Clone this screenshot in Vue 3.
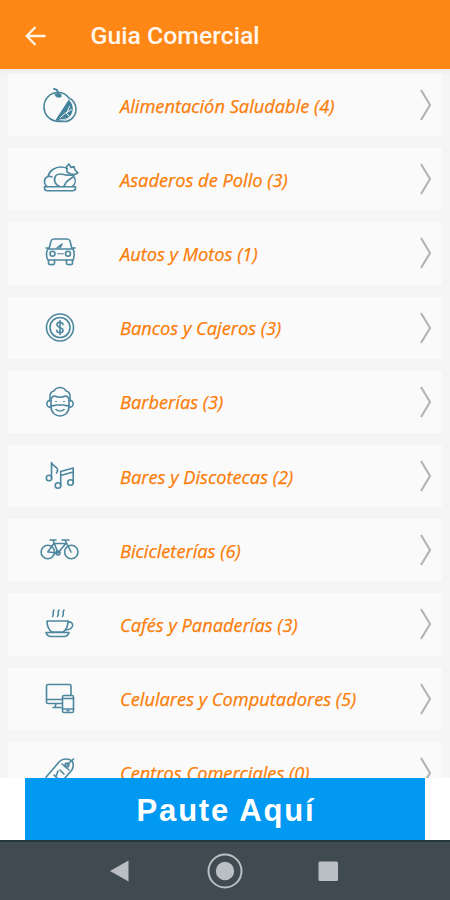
<template>
  <div class="screen">
    <header class="toolbar">
      <svg class="back" viewBox="0 0 22 22">
        <path d="M20.5 11H2M10.5 2L1.8 11l8.7 9" />
      </svg>
      <h1>Guia Comercial</h1>
    </header>

    <main class="list">
      <div v-for="item in categories" :key="item.name" class="row">
        <svg class="icon" viewBox="0 0 40 40" v-html="item.icon"></svg>
        <span class="label"><span class="label-text">{{ item.name }} ({{ item.count }})</span></span>
        <svg class="chevron" viewBox="0 0 14 34">
          <path d="M2 2l9 15-9 15" />
        </svg>
      </div>
    </main>

    <div class="banner-wrap">
      <div class="banner"><span>Paute Aquí</span></div>
    </div>

    <nav class="navbar">
      <svg viewBox="0 0 36 36"><path d="M24.500 7.500v21L6 18z" /></svg>
      <svg viewBox="0 0 36 36">
        <circle cx="18" cy="18" r="16.5" class="ring" />
        <circle cx="18" cy="18" r="9.2" />
      </svg>
      <svg viewBox="0 0 36 36"><rect x="8.5" y="8.5" width="19.5" height="19.5" rx="1.5" /></svg>
    </nav>
  </div>
</template>

<script setup>
const icons = {
  orange:
    '<path d="M15 36C8.500 34.500 4 29 4 22 4 14 10 7.500 18 7.500c4.500 0 8.500 2 10.800 5.500 4.200 1.500 7.200 6 7.200 11 0 7-5 12.500-12 12.500-3 0-6 .2-9-.5z"/><path d="M28.800 14.500L15 35.800c6 .2 11 0 14.500-3.500 5-5 4.500-13-.7-17.800z" fill="#43839c" stroke="none"/><path d="M26 28l5.500-3.500M26 28l3 3M25 28.500l-4.500 4M27 27.500l2.500-6" stroke="#fafafa" stroke-width="1"/><path d="M30.500 16c4 5 3.800 11-.5 15.500-2.500 2.500-6 3.500-10 3.200" stroke="#fafafa" stroke-width=".8"/><path d="M14 4c3 0 4 1.500 4 5" stroke-width="2"/><path d="M15 9h6v3h-4z" fill="#43839c" stroke-width="1"/>',
  chicken:
    '<path d="M7 27.500C3 24 4 18.500 8 17.500 9.500 11.500 15 8 21 8c2.500 0 4.500.5 6.500 1.500"/><path d="M19.500 27.500c-5-2-6.500-7.500-3.500-11 4-4 8 .5 13-.5l5 .5c0 2-5 3-8 7-1 1.500-1 3-2.500 4M8 17.500c1.500-.5 3 0 4 .5M34 18c2 3 1.500 7-1.500 9.500"/><path d="M27 13l-.5-5.500L29 5l2 3.500 3-1 1 3.500 3 3-4 1.500-3-.5z"/><path d="M4.500 27.700h31v1.500c0 1.500-1 2.500-3 2.500h-25c-2 0-3-1-3-2.500z"/>',
  car:
    '<path d="M9 16l2-8c.5-1.500 1.500-2 3-2h13c1.500 0 2.500.5 3 2l2 8M8 16h25c1.500 2 1.500 9 0 11H8c-2-2-2-9 0-11zM6 15h3M32 15h3"/><circle cx="12.500" cy="20.700" r="2.500"/><circle cx="28" cy="20.700" r="2.500"/><path d="M17.500 20.700h6" stroke-width="1.100"/><path d="M8.500 27v3.500c0 1.500 6 1.500 6 0V27M26.500 27v3.500c0 1.500 6 1.500 6 0V27M17 15l5-4M20 15l2-4"/>',
  coin:
    '<circle cx="20" cy="19.500" r="13.500"/><circle cx="20" cy="19.500" r="10"/><path d="M23 16.500c-.5-3-6-3-6 .2 0 3 6 2.400 6 5.500 0 3.300-6 3.300-6.300 0M20 12.500v14"/>',
  barber:
    '<path d="M10 19v-5c0-3 2-4.500 4-5 1-2 4-3.500 6-3.500s5 1.500 6 3.500c2 .5 4 2 4 5v5"/><path d="M11 17c1-2 2-3 3.500-3 3.500 1.500 7.500 1.500 11 0 1.500 0 2.500 1 3.500 3M11 17v8c0 6 5 9 9 9s9-3 9-9v-8"/><path d="M11 18.500c-6-1-5 8 0 6.500M29 18.500c6-1 5 8 0 6.500"/><path d="M11 23.500c2 1 3.500 0 5-.5h8c1.500.5 3 1.500 5 .5M16 27.500c2 2 6 2 8 0"/><path d="M15.500 19.500h1M23.500 19.500h1" stroke-width="1.100"/>',
  music:
    '<path d="M11.500 22V6.500c1 5 9 4 5 10.500"/><circle cx="9" cy="22" r="2.700"/><path d="M20.700 29.500V15.500l12.500-3.500v14M20.700 19.500l12.500-3.500"/><circle cx="18" cy="29.500" r="2.800"/><circle cx="30.500" cy="26.500" r="2.800"/>',
  bike:
    '<circle cx="7.800" cy="22" r="6.700"/><circle cx="31.300" cy="22" r="6.700"/><path d="M7.800 22l6-8.500h12L18 23zM18 23L13 10M31 22L25 10h4M10 10h6M22 10h3"/><circle cx="18" cy="23" r="2"/>',
  cup:
    '<path d="M7 17h21c0 6-2 9-5 11H12c-3-2-5-5-5-11zM28 18c6-1 7 7-2 8M6 28.500h23c-1 3-3 4-5 4H11c-3 0-4-1-5-4z"/><path d="M14 6c-2 2 .5 4-1.500 6.500M19 6c-2 2 .5 4-1.500 6.500M24 6c-2 2 .5 4-1.500 6.500"/>',
  computer:
    '<path d="M22 24.500H8c-1 0-1.500-.5-1.500-1.500V7c0-1 .5-1.500 1.500-1.500h21.500c1 0 1.500.5 1.500 1.500v9M6.500 20.500H22M16 25l-1 3M13 28.500h8"/><rect x="22.500" y="16.500" width="11" height="17" rx="1.500"/><path d="M22.500 19.500h11M22.500 30h11M27 31.800h2"/>',
  tag:
    '<path d="M7 23L19.500 8.500C21 7 23 6 25.500 6c3 0 5 .5 6.500 2s1.500 3.500 1 6c-.3 1.500-1 3-2 4L18 33c-2 2-4 1-5 0l-6-5c-1.500-1.300-1.500-3.500 0-5z"/><circle cx="27" cy="12" r="1.900"/><path d="M27 12l6.500-6M22 11l7 6M14 22l4 4M18 18l-3 8M20 17l4 4"/>'
}

const categories = [
  { name: 'Alimentación Saludable', count: 4, icon: icons.orange },
  { name: 'Asaderos de Pollo', count: 3, icon: icons.chicken },
  { name: 'Autos y Motos', count: 1, icon: icons.car },
  { name: 'Bancos y Cajeros', count: 3, icon: icons.coin },
  { name: 'Barberías', count: 3, icon: icons.barber },
  { name: 'Bares y Discotecas', count: 2, icon: icons.music },
  { name: 'Bicicleterías', count: 6, icon: icons.bike },
  { name: 'Cafés y Panaderías', count: 3, icon: icons.cup },
  { name: 'Celulares y Computadores', count: 5, icon: icons.computer },
  { name: 'Centros Comerciales', count: 0, icon: icons.tag }
]
</script>

<style>
body {
  margin: 0;
  overflow: hidden;
}
</style>

<style scoped>
.screen {
  width: 450px;
  height: 900px;
  display: flex;
  flex-direction: column;
  background: #fff;
  overflow: hidden;
}

.toolbar {
  flex: none;
  height: 69px;
  display: flex;
  align-items: center;
  padding: 2px 0 0 25px;
  box-sizing: border-box;
  background: #ff8716;
}

.back {
  width: 22px;
  height: 22px;
  fill: none;
  stroke: #fff3e6;
  stroke-width: 2.3;
}

.toolbar h1 {
  margin: 0 0 0 43.5px;
  font-family: Roboto, sans-serif;
  font-size: 24.8px;
  font-weight: 500;
  color: #fff6ec;
}

.list {
  height: 709px;
  flex: none;
  display: flex;
  flex-direction: column;
  gap: 12px;
  padding: 5px 8px 0;
  box-sizing: border-box;
  background: linear-gradient(#eeeeee, #f5f5f5 7px);
  overflow: hidden;
}

.row {
  flex: none;
  height: 62.2px;
  display: flex;
  align-items: center;
  padding: 0 10px 0 32px;
  box-sizing: border-box;
  background: #fafafa;
}

.icon {
  width: 40px;
  height: 40px;
  flex: none;
  fill: none;
  stroke: #4c879e;
  stroke-width: 1.6;
  stroke-linecap: round;
  stroke-linejoin: round;
}

.label {
  flex: 1;
  margin-left: 40px;
  white-space: nowrap;
}

.label-text {
  display: inline-block;
  padding-top: 1px;
  font-family: 'Open Sans', 'Noto Sans', sans-serif;
  font-size: 19px;
  font-style: italic;
  font-weight: 500;
  line-height: 26px;
  color: #fa7d08;
  -webkit-text-stroke: 0.25px #fa7d08;
  transform: scaleX(0.96);
  transform-origin: left;
}

.chevron {
  width: 14px;
  height: 34px;
  margin-right: -1px;
  fill: none;
  stroke: #b2b2b2;
  stroke-width: 2.1;
}

.banner-wrap {
  flex: none;
  height: 62px;
  padding: 0 25px;
}

.banner {
  height: 100%;
  display: flex;
  align-items: center;
  justify-content: center;
  padding: 3px 0 0 2px;
  box-sizing: border-box;
  background: #0299f2;
  color: #fff;
  font-family: 'Liberation Sans', Arial, sans-serif;
  font-size: 31px;
  font-weight: bold;
  letter-spacing: 1.8px;
}

.navbar {
  flex: 1;
  display: flex;
  align-items: center;
  justify-content: center;
  gap: 67px;
  background: #404b51;
  border-top: 2px solid #26383d;
}

.navbar svg {
  width: 36px;
  height: 36px;
  fill: #b9bfc2;
}

.navbar .ring {
  fill: none;
  stroke: #b9bfc2;
  stroke-width: 2;
}
</style>
